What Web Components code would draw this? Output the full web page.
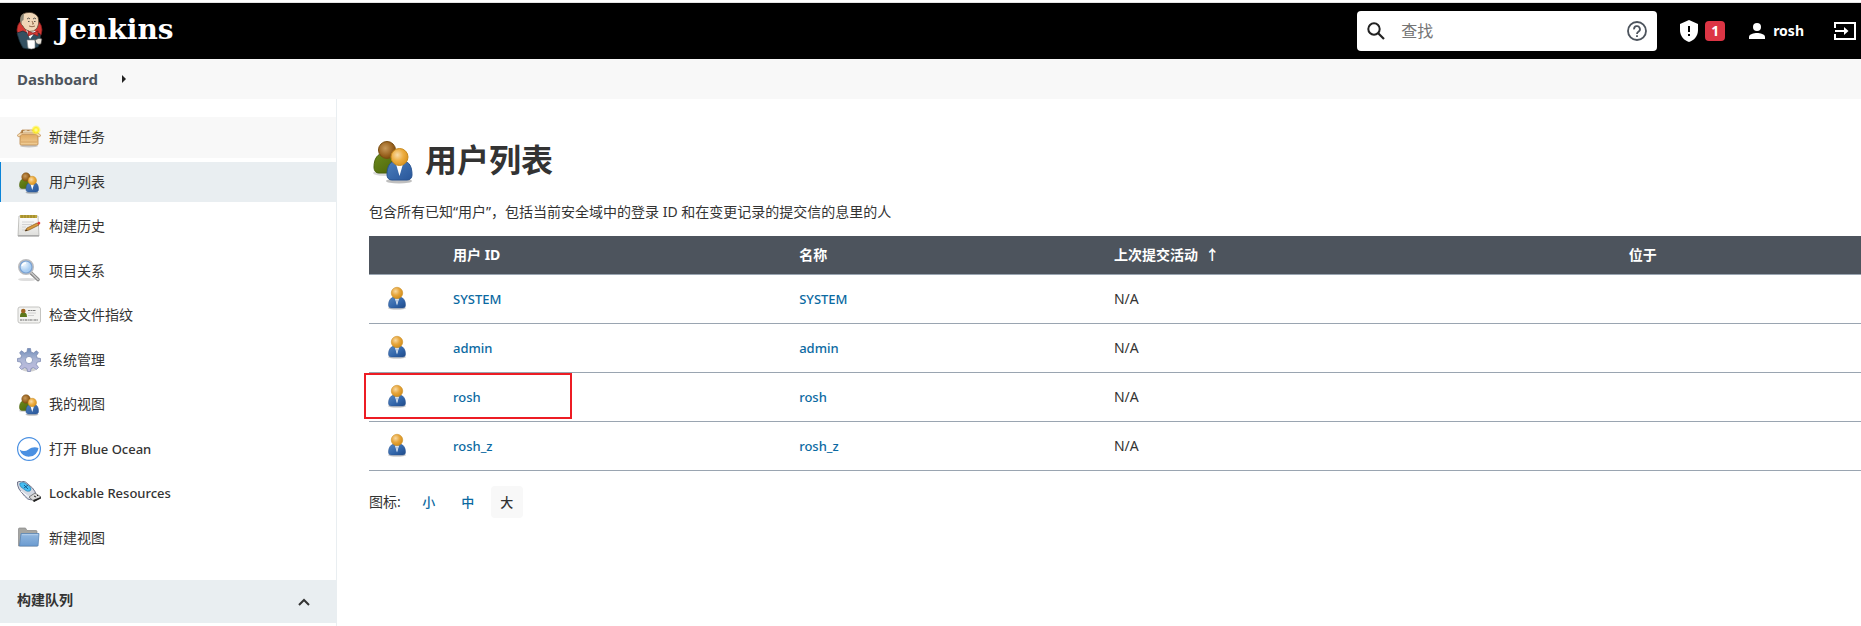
<!DOCTYPE html>
<html lang="zh-CN">
<head>
<meta charset="utf-8">
<title>用户列表 [Jenkins]</title>
<style>
html, body { margin: 0; }
body {
  font: 14px/20px "Noto Sans", "Noto Sans CJK SC", sans-serif;
  color: #333;
  background: #fff;
  overflow-x: hidden;
}
</style>
</head>
<body>
<jk-page>
  <jk-header slot="header" user="rosh" alerts="1"></jk-header>
  <jk-breadcrumbs slot="header">Dashboard</jk-breadcrumbs>
  <jk-side-panel slot="side">
    <jk-task icon="package" state="hover">新建任务</jk-task>
    <jk-task icon="users" state="active">用户列表</jk-task>
    <jk-task icon="notepad">构建历史</jk-task>
    <jk-task icon="search">项目关系</jk-task>
    <jk-task icon="card">检查文件指纹</jk-task>
    <jk-task icon="gear">系统管理</jk-task>
    <jk-task icon="users">我的视图</jk-task>
    <jk-task icon="ocean">打开 <span lang="en">Blue Ocean</span></jk-task>
    <jk-task icon="usb"><span lang="en">Lockable Resources</span></jk-task>
    <jk-task icon="folder">新建视图</jk-task>
    <jk-pane slot="pane">构建队列</jk-pane>
  </jk-side-panel>
  <jk-people></jk-people>
</jk-page>

<script>
const ICONS = {
  user: ['0 0 48 48', `
    <defs><radialGradient id="h" cx=".38" cy=".35" r=".7"><stop offset="0" stop-color="#f8d9a2"/><stop offset=".5" stop-color="#e7a63c"/><stop offset="1" stop-color="#cf8a16"/></radialGradient>
    <linearGradient id="b" x1="0" x2="1" y2="1"><stop offset="0" stop-color="#5788c2"/><stop offset=".6" stop-color="#2f63a8"/><stop offset="1" stop-color="#204a87"/></linearGradient></defs>
    <ellipse cx="24" cy="44" rx="18" ry="3.5" fill="#000" opacity=".2"/>
    <path d="M7 38c0-9 4-14 10-16h14c6 2 10 7 10 16 0 4-2 6-6 6H13c-4 0-6-2-6-6z" fill="url(#b)" stroke="#2a5592"/>
    <path d="M20 25l4 14 4-14z" fill="#fff"/><path d="M24 26l-2 3 2 8 2-8z" fill="#a9bfdc"/>
    <circle cx="24" cy="14" r="11.5" fill="url(#h)" stroke="#c98a1e"/>`],
  users: ['-1 -2 48 48', `
    <defs><radialGradient id="h" cx=".38" cy=".38" r=".7"><stop offset="0" stop-color="#f8dba8"/><stop offset=".5" stop-color="#edae43"/><stop offset="1" stop-color="#d8901a"/></radialGradient>
    <radialGradient id="d" cx=".4" cy=".4" r=".7"><stop offset="0" stop-color="#c89a5a"/><stop offset=".6" stop-color="#9a6320"/><stop offset="1" stop-color="#744508"/></radialGradient>
    <linearGradient id="b" x1="0" x2="1" y2="1"><stop offset="0" stop-color="#4d7fbd"/><stop offset="1" stop-color="#28569a"/></linearGradient>
    <linearGradient id="g" x2="1" y2="1"><stop offset="0" stop-color="#6c8a1c"/><stop offset="1" stop-color="#4a6208"/></linearGradient></defs>
    <ellipse cx="29" cy="43" rx="13" ry="2.500" fill="#000" opacity=".25"/><ellipse cx="14" cy="35" rx="11" ry="3" fill="#000" opacity=".15"/>
    <path d="M4 29c0-9 4-13 9-14h9c5 1 8 6 8 14 0 4-2 6-5 6H9c-3 0-5-2-5-6z" fill="url(#g)" stroke="#49600d"/>
    <circle cx="17" cy="12" r="8.500" fill="url(#d)" stroke="#7a4e12"/>
    <path d="M17 37c0-9 3-13 8-14h9c5 1 8 5 8 14 0 3-2 5-5 5H22c-3 0-5-2-5-5z" fill="url(#b)" stroke="#2a5592"/>
    <path d="M26 26l3.500 12L33 26z" fill="#fff"/>
    <circle cx="29.500" cy="19" r="8.500" fill="url(#h)" stroke="#c98a1e"/>`],
  package: ['0 -2 24 24', `
    <defs><linearGradient id="a" y2="1" x2="0"><stop offset="0" stop-color="#dfa75e"/><stop offset="1" stop-color="#f1cf98"/></linearGradient>
    <radialGradient id="s"><stop offset="0" stop-color="#fffdb0"/><stop offset=".5" stop-color="#fff02a"/><stop offset="1" stop-color="#fff02a" stop-opacity="0"/></radialGradient></defs>
    <ellipse cx="12" cy="19" rx="9" ry="1.500" opacity=".2"/>
    <path d="M5 3h14l2 4H3z" fill="#a97a43" stroke="#b98343" stroke-width=".7"/><path d="M6 4l3-1 2 1 3-1 3 1v2H6z" fill="#ead7b6"/>
    <path d="M3 7h18v10q0 1-1 1H4q-1 0-1-1z" fill="url(#a)" stroke="#ba8648" stroke-width=".8"/>
    <path d="M3 6L0 8.500l2 1.500 3-2.500h14l3 2.500 2-1.500L21 6z" fill="#f4d9ad" stroke="#c2915a" stroke-width=".7"/>
    <path d="M4 15h16" stroke="#cc9654" stroke-width=".7"/><circle cx="19" cy="3" r="5" fill="url(#s)"/>`],
  notepad: ['0 0 24 24', `
    <defs><linearGradient id="p" x2="0" y2="1"><stop offset="0" stop-color="#fff"/><stop offset="1" stop-color="#dededb"/></linearGradient></defs>
    <path d="M2 2h19l1 20H1z" fill="url(#p)" stroke="#b4b4b0" stroke-width=".8"/><path d="M1 21h21v1.500H1z" fill="#aaa"/>
    <path d="M3 1h17v3H3z" fill="#bda63c"/><path d="M5 1v3M8 1v3M11 1v3M14 1v3M17 1v3" stroke="#887321" stroke-width=".8"/>
    <path d="M5 8h12M5 10.500h10M5 13h4M5 16h6" stroke="#ccc" stroke-width=".8"/>
    <path d="M8 17l2-3 10-5 2 2-10 5z" fill="#d89b3e" stroke="#87571c" stroke-width=".7"/><path d="M20 9l2-1.500 1.500 1.500-1.500 2z" fill="#e33b36"/><path d="M8 17l1.500-1.500 1 1z" fill="#222"/>`],
  search: ['0 0 24 24', `
    <defs><radialGradient id="l" cx=".35" cy=".3"><stop offset="0" stop-color="#f3faff"/><stop offset="1" stop-color="#a8cdf2"/></radialGradient></defs>
    <ellipse cx="10" cy="20.500" rx="9" ry="1.600" opacity=".13"/>
    <path d="M13.500 13.500l7.500 7" stroke="#858585" stroke-width="3.600" stroke-linecap="round"/><path d="M14 13.500l7 7" stroke="#c9c9c9" stroke-width="1.600" stroke-linecap="round"/>
    <circle cx="9" cy="8" r="7" fill="url(#l)" stroke="#bcbcbe" stroke-width="2"/><circle cx="9" cy="8" r="6" fill="none" stroke="#7aa3d4" stroke-width="1.200"/>
    <path d="M5 7q1-3 4-3" stroke="#fff" stroke-width="1.500" fill="none"/>`],
  card: ['0 0 24 24', `
    <rect x="1" y="4" width="22.500" height="16" rx="2" fill="#f3f3f1" stroke="#c4c4c1"/>
    <path d="M3 14c0-4 1-4 3-5 3 1 4 1 4 5z" fill="#5b781c"/><circle cx="6.300" cy="8" r="2.300" fill="#a06423"/>
    <path d="M11 7.500h8" stroke="#777" stroke-width="1" stroke-dasharray="2 .5"/><path d="M11 10h8M11 12.500h6" stroke="#d0d0d0"/>
    <path d="M3 17h18" stroke="#666" stroke-width="1.200" stroke-dasharray="2.500 .6 1 .6"/>`],
  gear: ['0 0 24 24', `
    <defs><linearGradient id="k" x2="0" y2="1"><stop offset="0" stop-color="#6f8db9"/><stop offset=".5" stop-color="#aeb7d5"/><stop offset="1" stop-color="#bfbce0"/></linearGradient></defs>
    <ellipse cx="12" cy="21.500" rx="7" ry="2" opacity=".18"/>
    <path fill="url(#k)" stroke="#7483ac" stroke-width=".7" stroke-linejoin="round" d="M10.500.500h3l.5 3.500 2.500 1 3-2.200 1.900 1.900-2 3 .9 2.300 3.200.5v3l-3.200.5-1 2.500 2.200 3-2.100 2-3-2-2.300 1-.6 3h-3l-.6-3-2.300-1-3 2-2.100-2 2.200-3-1-2.500-3.200-.5v-3l3.200-.5.900-2.300-2-3L4.500 2.800l3 2.200L10 4z"/>
    <circle cx="12" cy="12" r="3.600" fill="#fff" stroke="#8290b6" stroke-width=".8"/>`],
  ocean: ['0 0 24 24', `
    <circle cx="12" cy="12" r="11.400" fill="#fff" stroke="#4a90e2" stroke-width="1.200"/>
    <path d="M2.500 12.500c3 2 6 2 9 0s6-3 10-1.500a9.700 9.700 0 0 1-19 1.500z" fill="#4a90e2"/>`],
  usb: ['0 0 24 24', `
    <path d="M.5 1q4-2 8 0l7 6q4 4 3 8l-4 4q-4 0-7-4L2 8Q0 4 .5 1z" fill="#d3d8e2" stroke="#62677f" stroke-width=".9"/>
    <path d="M3 2q3-1 5 0l5 4q2 2 0 4-3 1-5-1L4 6Q2 4 3 2z" fill="#45bdf2" stroke="#1873a8" stroke-width=".6"/>
    <path d="M7 4l4 4M7 7l4-3" stroke="#0a4777" stroke-width=".8"/><path d="M4 10l9 7" stroke="#fff"/>
    <path d="M12 16l6-4 6 4-7 4.500z" fill="#dadada" stroke="#555" stroke-width=".7"/><path d="M16 19l8-3v1.500L17 21z" fill="#222"/><path d="M17 15l2 1M20 14l1 1" stroke="#222"/>`],
  folder: ['0 0 24 24', `
    <defs><linearGradient id="f" x2="0" y2="1"><stop offset="0" stop-color="#93b8df"/><stop offset="1" stop-color="#6b9bd0"/></linearGradient></defs>
    <path d="M1.500 3q0-1 1-1h6l1.500 2.500h9q1 0 1 1V20H1.500z" fill="#a6a6a2" stroke="#888" stroke-width=".7"/>
    <path d="M4 7.500h18L21 20H2.500z" fill="url(#f)" stroke="#5a85b5" stroke-width=".8"/><path d="M5 8.700h16" stroke="#bfd7ef" stroke-width=".8"/>`],
  butler: ['0 0 28 38', `
    <circle cx="13.500" cy="18" r="12.500" fill="#d33833" stroke="#81201f" stroke-width=".8"/>
    <path d="M1 21q3-1 6-2l6 3 5-2q4 1 6 2l1 7-3 6-10 2-5-1q-4-6-6-15z" fill="#335061" stroke="#132a34" stroke-width=".7"/>
    <path d="M10 18l4 9 6-8z" fill="#fff"/>
    <path d="M5 10Q3 2 10 .800q8-1.800 12 4.200 1 3 .5 7-.5 5-5 7-4 1.500-8-1.500-2-2-3-4-2-1-1.500-3.500z" fill="#f0d6b7" stroke="#4b3a2a" stroke-width=".7"/>
    <path d="M4.500 11Q3 4 8 1.500L7.500 8 6 9z" fill="#8b8778"/><path d="M11 7q2-2 3 0M17 7q2-2 3 0M12 9.500h1.500M18 9.500h1.500" stroke="#333" stroke-width=".8" fill="none"/>
    <path d="M16 9l1.500 3H16M13 14q3 1.500 6 0" stroke="#7a4d31" stroke-width=".8" fill="none"/>
    <path d="M12 19l5 2 5-2v5l-5-2-5 2z" fill="#d33833" stroke="#7d1d1c" stroke-width=".7"/>
    <path d="M11 28h8v8q-4 2-7 0z" fill="#fff" stroke="#888" stroke-width=".6"/><path d="M19 28q4-3 7-1l-1 5q-3 1-5-1z" fill="#e8e2d8" stroke="#333" stroke-width=".6"/>`],
  find: ['0 0 18 18', `<circle cx="7" cy="7" r="5.700" fill="none" stroke="#222" stroke-width="2"/><path d="M11 11l6 6" stroke="#222" stroke-width="2.200"/>`],
  help: ['0 0 24 24', `<circle cx="12" cy="12" r="10.800" fill="none" stroke="#4d545d" stroke-width="2.200"/><path d="M8.500 10a3.500 3.500 0 1 1 5.500 2.500c-1.500 1-2 1.500-2 3" fill="none" stroke="#4d545d" stroke-width="2.200"/><path d="M10.900 17h2.200v2.200h-2.200z" fill="#4d545d"/>`],
  shield: ['0 0 18 22', `<path d="M9 0l9 4v6c0 6-4 10.500-9 12-5-1.500-9-6-9-12V4z" fill="#fff"/><path d="M8 6h2v6H8zM8 14h2v2H8z" fill="#000"/>`],
  person: ['0 0 16 16', `<circle cx="8" cy="4" r="4" fill="#fff"/><path d="M0 16v-2c0-3 5-4 8-4s8 1 8 4v2z" fill="#fff"/>`],
  exit: ['0 0 22 18', `<path d="M1 6V1h20v16H1v-5M1 9h12" fill="none" stroke="#fff" stroke-width="2"/><path d="M10 5l4.500 4-4.500 4z" fill="#fff"/>`],
  up: ['0 0 12 8', `<path d="M1 7l5-5 5 5" fill="none" stroke="#333" stroke-width="2"/>`],
  next: ['0 0 4 8', `<path d="M0 0l4 4-4 4z" fill="#222"/>`]
};

function define(name, render) {
  customElements.define(name, class extends HTMLElement {
    connectedCallback() {
      if (this.shadowRoot) return;
      this.attachShadow({ mode: 'open' }).innerHTML = render(this);
    }
  });
}

define('jk-icon', el => {
  const [box, body] = ICONS[el.getAttribute('name')];
  return `<style>:host{display:block;flex:none;width:24px;height:24px}svg{display:block;width:100%;height:100%}</style>
    <svg viewBox="${box}" aria-hidden="true">${body}</svg>`;
});

define('jk-page', () => `
<style>
:host{display:block}
header{border-top:1px solid #e3e3e3;margin-top:2px}
.body{display:grid;grid-template-columns:337px minmax(0,1fr)}
</style>
<header><slot name="header"></slot></header>
<div class="body"><slot name="side"></slot><main><slot></slot></main></div>`);

define('jk-header', el => `
<style>
:host{display:flex;align-items:center;height:56px;background:#000;color:#fff;padding:0 5px 0 16px;box-sizing:border-box}
a{color:inherit;text-decoration:none}
.brand{display:flex;align-items:center;gap:12px;margin-right:auto;font:bold 28px/36px "DejaVu Serif",serif}
.brand jk-icon{width:28px;height:38px}
.brand span{padding-bottom:2px}
form{display:flex;align-items:center;width:300px;height:40px;box-sizing:border-box;padding:0 10px;background:#fff;border-radius:4px}
form jk-icon{width:18px;height:18px}
input{flex:1;min-width:0;margin:0 14px;border:0;outline:0;background:none;font:16px/24px "Noto Sans","Noto Sans CJK SC",sans-serif;color:#333}
input::placeholder{color:#757575}
.alerts{display:flex;align-items:center;gap:7px;margin-left:23px}
.alerts jk-icon{width:18px;height:22px}
.alerts b{width:20px;background:#dc3545;border-radius:4px;text-align:center;font-size:14px;line-height:20px}
.user{display:flex;align-items:center;gap:8px;margin-left:24px;font-weight:700;font-size:14px}
.user jk-icon{width:16px;height:16px}
.out{margin-left:30px}
.out jk-icon{width:22px;height:18px}
.help jk-icon{width:20px;height:20px}
</style>
<a class="brand" href="#"><jk-icon name="butler"></jk-icon><span>Jenkins</span></a>
<form role="search"><jk-icon name="find"></jk-icon><input type="text" placeholder="查找" aria-label="查找"><a class="help" href="#" aria-label="帮助"><jk-icon name="help"></jk-icon></a></form>
<a class="alerts" href="#"><jk-icon name="shield"></jk-icon><b>${el.getAttribute('alerts')}</b></a>
<a class="user" href="#"><jk-icon name="person"></jk-icon><span>${el.getAttribute('user')}</span></a>
<a class="out" href="#" aria-label="注销"><jk-icon name="exit"></jk-icon></a>`);

define('jk-breadcrumbs', () => `
<style>
:host{display:flex;align-items:center;gap:24px;height:40px;padding:0 17px;background:#f8f8f8}
a{color:#4d545d;font-weight:700;font-size:15px;text-decoration:none}
jk-icon{width:4px;height:8px}
</style>
<a href="#"><slot></slot></a><jk-icon name="next"></jk-icon>`);

define('jk-side-panel', () => `
<style>
:host{display:block;border-right:1px solid #e9eef1;padding:18px 0 3px;min-height:506px}
nav{display:grid;grid-auto-rows:1fr;gap:4px;min-height:441px;margin-bottom:22px}
</style>
<nav><slot></slot></nav><slot name="pane"></slot>`);

define('jk-task', el => {
  const state = el.getAttribute('state');
  return `
<style>
:host{display:grid}
a{display:flex;align-items:center;gap:8px;padding:0 16px;border-left:1px solid transparent;color:#333;text-decoration:none}
a.hover{background:#f8f8f8;border-color:#f8f8f8}
a.active{background:#e9eef1;border-color:#0b84d8}
::slotted(span){font-size:13px;font-weight:500}
</style>
<a class="${state || ''}" href="#"><jk-icon name="${el.getAttribute('icon')}"></jk-icon><span><slot></slot></span></a>`;
});

define('jk-pane', () => `
<style>
:host{display:flex;align-items:center;justify-content:space-between;height:43px;padding:0 26px 0 17px;background:#e9eef1;font-weight:700}
span{padding-bottom:3px}
button{border:0;padding:0;background:none}
jk-icon{width:12px;height:8px}
</style>
<span><slot></slot></span><button type="button" aria-label="收起"><jk-icon name="up"></jk-icon></button>`);

const people = [['SYSTEM'], ['admin'], ['rosh', true], ['rosh_z']];

define('jk-people', () => `
<style>
:host{display:block;padding:37px 0 40px 32px}
h1{display:flex;align-items:center;gap:8px;margin:0;font-size:32px;line-height:48px}
h1 jk-icon{width:48px;height:48px}
p{margin:18px 0 14px}
table{width:100%;table-layout:fixed;border-collapse:collapse}
.c1{width:76px}.c2{width:23.2%}.c3{width:21.1%}.c4{width:34.5%}
th,td{text-align:left;padding:0 8px;border-bottom:1px solid #9aa5b1}
th{height:38px;background:#4d545d;color:#fff;font-weight:700}
th a{color:inherit;text-decoration:none}
td{height:48px}
td:first-child{position:relative;padding-left:16px}
td jk-icon{margin-bottom:2px}
td a,footer a{color:#0b6aa2;text-decoration:none}
td a{font-size:13px;font-weight:500}
.mark{position:absolute;left:-5px;top:0;width:204px;height:42px;border:2px solid #ed1c24}
footer{display:flex;align-items:center;margin-top:15px}
footer a,footer b{width:32px;text-align:center;line-height:32px;margin-left:7px;font-size:13px;font-weight:500}
footer a:first-of-type{margin-left:12px}
footer b{background:#f8f8f8;border-radius:4px}
</style>
<h1><jk-icon name="users"></jk-icon><span>用户列表</span></h1>
<p>包含所有已知“用户”，包括当前安全域中的登录 ID 和在变更记录的提交信的息里的人</p>
<table>
<colgroup><col class="c1"><col class="c2"><col class="c3"><col class="c4"><col></colgroup>
<thead><tr><th></th><th><a href="#">用户 ID</a></th><th><a href="#">名称</a></th><th><a href="#">上次提交活动&nbsp; ↑</a></th><th><a href="#">位于</a></th></tr></thead>
<tbody>${people.map(([id, marked]) => `<tr><td><jk-icon name="user"></jk-icon>${marked ? '<span class="mark"></span>' : ''}</td><td><a href="#">${id}</a></td><td><a href="#">${id}</a></td><td>N/A</td><td></td></tr>`).join('')}</tbody>
</table>
<footer><span>图标:</span><a href="#">小</a><a href="#">中</a><b>大</b></footer>`);
</script>
</body>
</html>
